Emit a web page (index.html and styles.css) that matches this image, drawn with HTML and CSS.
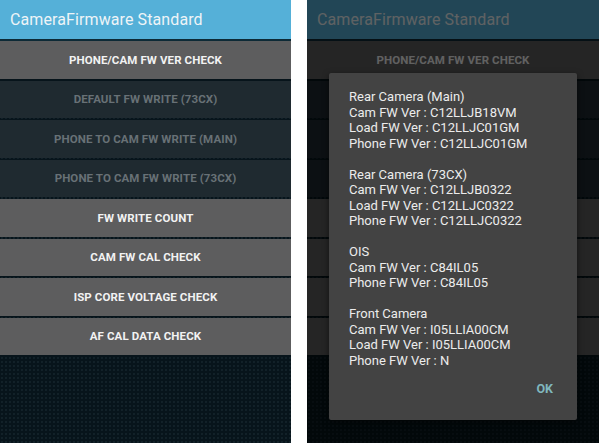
FILE: index.html
```html
<!DOCTYPE html>
<html lang="en">
<head>
    <meta charset="UTF-8">
    <meta name="viewport" content="width=device-width, initial-scale=1.0">
    <title>CameraFirmware Standard</title>
    <link rel="stylesheet" href="styles.css">
</head>
<body>
    <div class="screens">
        <div class="phone">
            <div class="app-bar">CameraFirmware Standard</div>
            <div class="menu">
                <button class="menu-btn">PHONE/CAM FW VER CHECK</button>
                <button class="menu-btn" disabled>DEFAULT FW WRITE (73CX)</button>
                <button class="menu-btn" disabled>PHONE TO CAM FW WRITE (MAIN)</button>
                <button class="menu-btn" disabled>PHONE TO CAM FW WRITE (73CX)</button>
                <button class="menu-btn">FW WRITE COUNT</button>
                <button class="menu-btn">CAM FW CAL CHECK</button>
                <button class="menu-btn">ISP CORE VOLTAGE CHECK</button>
                <button class="menu-btn">AF CAL DATA CHECK</button>
            </div>
        </div>

        <div class="phone">
            <div class="app-bar">CameraFirmware Standard</div>
            <div class="menu">
                <button class="menu-btn">PHONE/CAM FW VER CHECK</button>
                <button class="menu-btn" disabled>DEFAULT FW WRITE (73CX)</button>
                <button class="menu-btn" disabled>PHONE TO CAM FW WRITE (MAIN)</button>
                <button class="menu-btn" disabled>PHONE TO CAM FW WRITE (73CX)</button>
                <button class="menu-btn">FW WRITE COUNT</button>
                <button class="menu-btn">CAM FW CAL CHECK</button>
                <button class="menu-btn">ISP CORE VOLTAGE CHECK</button>
                <button class="menu-btn">AF CAL DATA CHECK</button>
            </div>

            <div class="scrim"></div>
            <div class="dialog">
                <div class="dialog-body">
                    <p>Rear Camera (Main)<br>Cam FW Ver : C12LLJB18VM<br>Load FW Ver : C12LLJC01GM<br>Phone FW Ver : C12LLJC01GM</p>
                    <p>Rear Camera (73CX)<br>Cam FW Ver : C12LLJB0322<br>Load FW Ver : C12LLJC0322<br>Phone FW Ver : C12LLJC0322</p>
                    <p>OIS<br>Cam FW Ver : C84IL05<br>Phone FW Ver : C84IL05</p>
                    <p>Front Camera<br>Cam FW Ver : I05LLIA00CM<br>Load FW Ver : I05LLIA00CM<br>Phone FW Ver : N</p>
                </div>
                <div class="dialog-actions">
                    <button class="dialog-btn">OK</button>
                </div>
            </div>
        </div>
    </div>
</body>
</html>
```

FILE: styles.css
```css
:root {
    --bar-color: #55b0d8;
    --btn-color: #5d5d5e;
    --btn-off: #1f2a30;
    --screen-bg: #07141b;
}

* {
    box-sizing: border-box;
    margin: 0;
    padding: 0;
}

body {
    background: #fff;
    font-family: 'Roboto', 'Liberation Sans', sans-serif;
}

.screens {
    display: flex;
    gap: 16px;
    width: 599px;
    height: 443px;
}

.phone {
    position: relative;
    width: 291px;
    height: 443px;
    overflow: hidden;
    background-color: var(--screen-bg);
    background-image: radial-gradient(circle, rgba(90, 120, 130, 0.18) 0.6px, transparent 1px);
    background-size: 4px 4px;
}

.phone:last-child {
    width: 292px;
}

.app-bar {
    height: 39px;
    padding-left: 10px;
    display: flex;
    align-items: center;
    background: var(--bar-color);
    color: #eef4f7;
    font-size: 16px;
    letter-spacing: 0.1px;
    border-bottom: 2px solid #0d2a36;
    box-sizing: content-box;
}

.menu {
    display: flex;
    flex-direction: column;
    gap: 2px;
}

.menu-btn {
    height: 37.5px;
    width: 100%;
    border: none;
    background: var(--btn-color);
    color: #f2f2f2;
    font-family: inherit;
    font-size: 11.5px;
    font-weight: bold;
    letter-spacing: 0.1px;
}

.menu-btn:disabled {
    background: var(--btn-off);
    color: #687176;
}

.scrim {
    position: absolute;
    inset: 0;
    background: rgba(0, 0, 0, 0.6);
}

.dialog {
    position: absolute;
    left: 22px;
    top: 73px;
    width: 248px;
    height: 347px;
    background: #434343;
    border-radius: 2px;
    box-shadow: 0 2px 6px rgba(0, 0, 0, 0.5);
    display: flex;
    flex-direction: column;
    justify-content: space-between;
}

.dialog-body {
    padding: 16px 10px 0 20px;
    color: #ececec;
    font-size: 13px;
    line-height: 15.5px;
}

.dialog-body p + p {
    margin-top: 15.5px;
}

.dialog-actions {
    display: flex;
    justify-content: flex-end;
    padding: 0 24px 24px 0;
}

.dialog-btn {
    border: none;
    background: none;
    color: #80b7be;
    font-family: inherit;
    font-size: 12.5px;
    font-weight: bold;
}
```
